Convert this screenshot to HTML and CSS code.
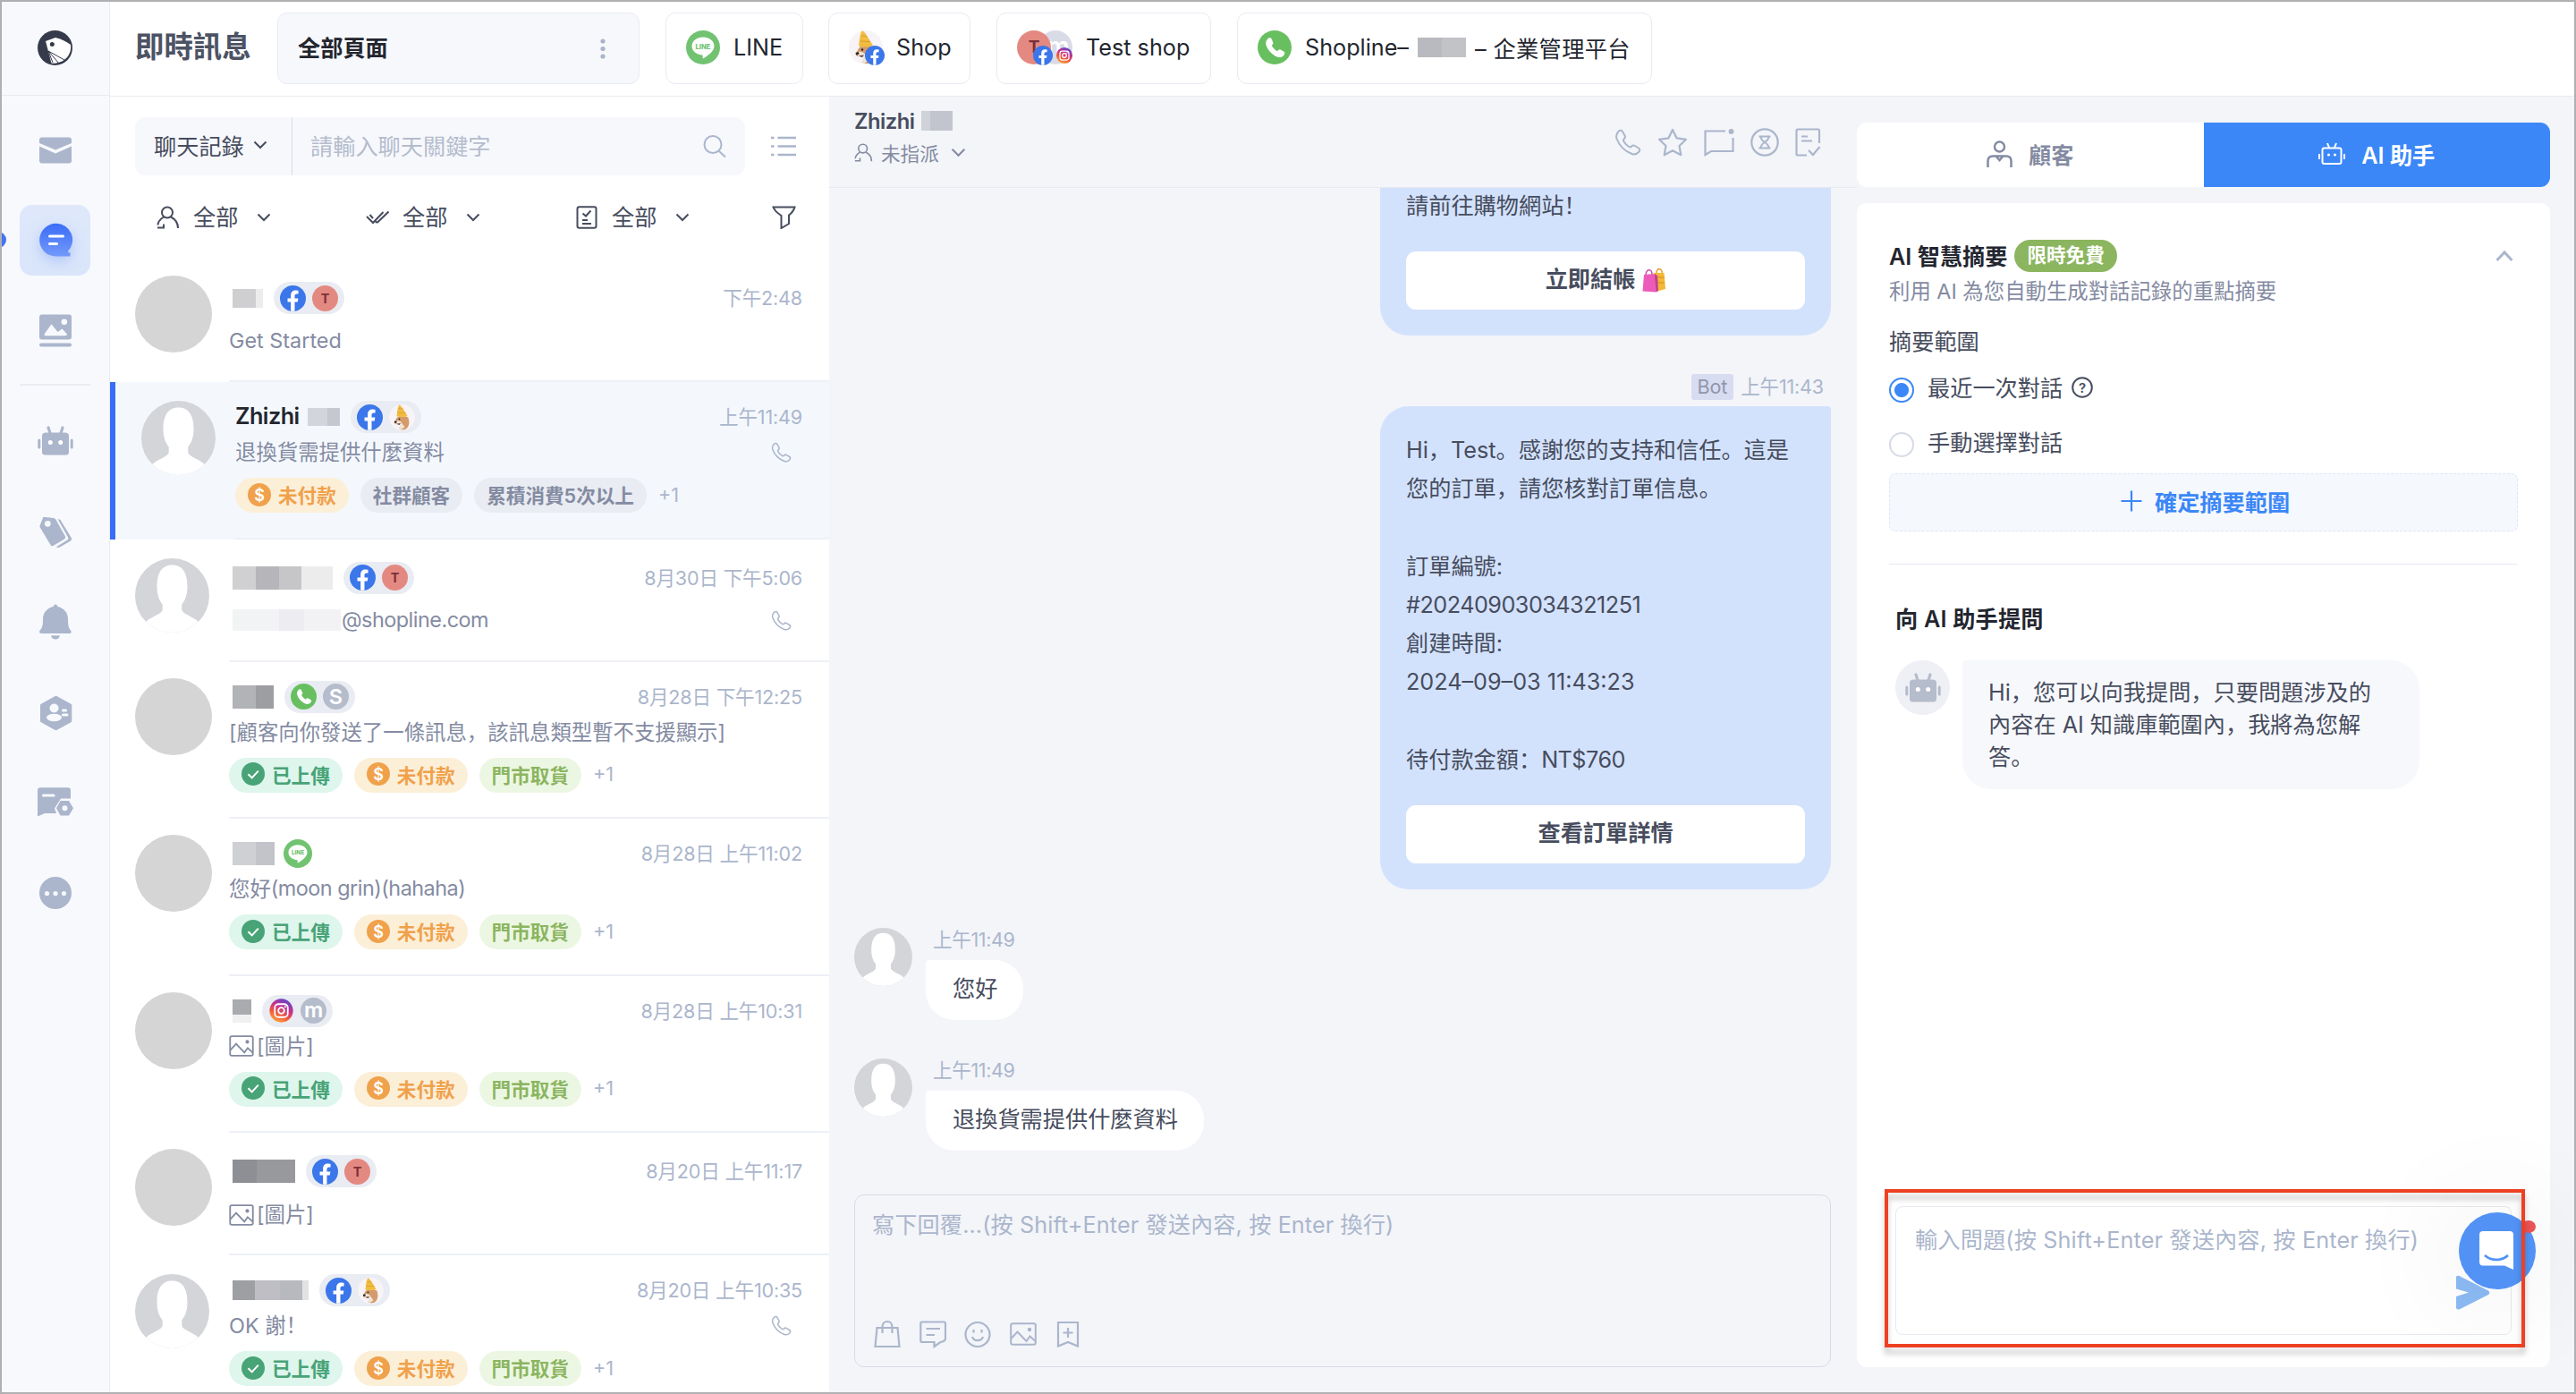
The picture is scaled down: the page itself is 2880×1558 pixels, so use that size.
FILE: index.html
```html
<!DOCTYPE html>
<html lang="zh-CN">
<head>
    <meta charset="UTF-8">
    <meta name="viewport" content="width=device-width, initial-scale=1.0">
    <title>即時訊息</title>
    <link rel="stylesheet" href="styles.css">
</head>
<body>
    <!-- Icon sprite -->
    <svg class="sprite" width="0" height="0">
        <defs>
            <linearGradient id="chat-grad" x1="0" y1="0" x2="0" y2="1"><stop offset="0" stop-color="#3a6df7"/><stop offset="1" stop-color="#7399fa"/></linearGradient>
            <linearGradient id="ig-grad" x1="0.2" y1="1" x2="0.7" y2="0"><stop offset="0" stop-color="#fbb040"/><stop offset="0.35" stop-color="#f15a3a"/><stop offset="0.65" stop-color="#c4308f"/><stop offset="1" stop-color="#5a48d0"/></linearGradient>
            <clipPath id="avatar-clip"><circle cx="50" cy="50" r="50"/></clipPath>
        </defs>
        <symbol id="i-chevron" viewBox="0 0 16 12"><path d="M1.5 2.5 L8 9 L14.5 2.5" fill="none" stroke="currentColor" stroke-width="2"/></symbol>
        <symbol id="i-phone" viewBox="0 0 30 30"><path d="M4 3.5 C5.5 1.5 8 1.3 9 3 L11.5 7.5 C12.3 9.2 12 10.3 10.8 11.2 C9.8 12 9.8 13 10.5 14.2 C12 16.8 13.8 18.5 16.3 20 C17.5 20.7 18.3 20.5 19.2 19.5 C20.2 18.3 21.5 18.2 22.8 19 L27 21.5 C28.7 22.6 28.5 24.5 27 26 C25 28.2 22.3 29 19.5 28 C11 24.8 5.5 19 2.5 11 C1.5 8 2.2 5.6 4 3.5 Z" fill="none" stroke="currentColor" stroke-width="2"/></symbol>
        <symbol id="i-person" viewBox="0 0 26 26"><circle cx="12" cy="7.5" r="6" fill="none" stroke="currentColor" stroke-width="2"/><path d="M8 12.5 C4 15 1.5 18.5 1.5 21.5 M1 24.5 L8 24.5 L8 20.5 M16 12.5 C21 15 24 19 24 25" fill="none" stroke="currentColor" stroke-width="2"/></symbol>
        <symbol id="i-image" viewBox="0 0 30 26"><rect x="1.2" y="1.2" width="27.6" height="23.6" rx="2" fill="none" stroke="currentColor" stroke-width="2"/><path d="M1.5 18 L8.5 10.5 L18.5 21 L22.5 15.5 L28.5 21" fill="none" stroke="currentColor" stroke-width="2"/><circle cx="22" cy="8" r="2.2" fill="currentColor"/></symbol>
        <symbol id="i-fb" viewBox="0 0 32 32"><circle cx="16" cy="16" r="16" fill="#3b76ea"/><path d="M13.4 31.8 V20.4 H9.4 V15.9 H13.4 V12.4 C13.4 8.4 15.7 6.2 19.3 6.2 C21 6.2 22.7 6.5 22.7 6.5 V10.4 H20.8 C18.8 10.4 18.2 11.6 18.2 12.9 V15.9 H22.5 L21.8 20.4 H18.2 V31.8 Z" fill="#fff"/></symbol>
        <symbol id="i-t" viewBox="0 0 32 32"><circle cx="16" cy="16" r="16" fill="#e48981"/><text x="16" y="22" text-anchor="middle" font-family="Inter" font-weight="700" font-size="16" fill="#7b3038">T</text></symbol>
        <symbol id="i-wa" viewBox="0 0 32 32"><circle cx="16" cy="16" r="16" fill="#68bf60"/><path d="M9.3 8.2 C10.6 6.5 12.5 6.6 13.2 8.2 L14.6 11.4 C15 12.5 14.2 13.3 13.3 14.2 C14.5 16.8 16.2 18.4 18.7 19.5 C19.7 18.3 20.5 17.6 21.6 18.2 L24.6 19.8 C26 20.8 25.7 22.3 24.6 23.5 C22.6 25.8 19.8 25.7 16.8 24.2 C12.5 21.8 9.6 18.6 8.2 14.4 C7.4 11.8 7.7 9.8 9.3 8.2 Z" fill="#fff"/></symbol>
        <symbol id="i-s" viewBox="0 0 32 32"><circle cx="16" cy="16" r="16" fill="#b5bccb"/><text x="16" y="25.5" text-anchor="middle" font-family="Inter" font-weight="600" font-size="26" fill="#fff">S</text></symbol>
        <symbol id="i-m" viewBox="0 0 32 32"><circle cx="16" cy="16" r="16" fill="#b5bccb"/><text x="16" y="24.5" text-anchor="middle" font-family="Inter" font-weight="600" font-size="26" fill="#fff">m</text></symbol>
        <symbol id="i-line" viewBox="0 0 38 38"><circle cx="19" cy="19" r="19" fill="#71c371"/><path d="M19 7.5 C26 7.5 31.5 11.9 31.5 17.5 C31.5 23.5 24 28.5 19 31.5 C18.4 31.5 18.8 29 18.5 27.5 C11.5 27 6.5 23 6.5 17.5 C6.5 11.9 12 7.5 19 7.5 Z" fill="#fff"/><text x="19" y="20.7" text-anchor="middle" font-family="Inter" font-weight="800" font-size="7.6" fill="#71c371">LINE</text></symbol>
        <symbol id="i-ig" viewBox="0 0 32 32"><circle cx="16" cy="16" r="14.5" fill="url(#ig-grad)"/><rect x="8" y="8" width="16" height="16" rx="4.5" fill="none" stroke="#fff" stroke-width="2"/><circle cx="16" cy="16" r="3.7" fill="none" stroke="#fff" stroke-width="2"/><circle cx="20.8" cy="11.3" r="1.2" fill="#fff"/></symbol>
        <symbol id="i-dog" viewBox="0 0 38 38"><circle cx="19" cy="19" r="19" fill="#f7f3f6"/><path d="M11 20 C13 17 17 16 22 17 L28 19 C30 25 30 31 26 35 C22 38 17 37.500 15 35 C17 32 18 29 16 28 L10 29 C7 28 7 25 9 24 Z" fill="#d49a6a"/><path d="M10 24 C14 23 18 25 19 28 L23 33 L17 37 L15 34 C17 31 17 29 14 28.500 L10 29 Z" fill="#f1e4d8"/><path d="M7.500 25 L11 24 L11.500 26.500 L8.500 27.500 Z" fill="#2c2524"/><path d="M10.500 28.500 L17 27.500 L15 30 Z" fill="#5a3a33"/><circle cx="15" cy="21.500" r="1.200" fill="#2c2524"/><path d="M14.500 0.500 C17 0.500 19 4 21.500 8 L27 17 C22 19 16 19 11 17.500 C12 12 12 5 14.500 0.500 Z" fill="#f2bc41"/><path d="M14 6 L20 6.500 M12.500 12 L24 12.500" stroke="#d99c2b" stroke-width="1"/></symbol>
        <symbol id="i-user" viewBox="0 0 100 100"><g clip-path="url(#avatar-clip)"><rect width="100" height="100" fill="#d3d5d9"/><path d="M50 9 C63 9 70.500 18 70.500 38 C70.500 50 67 57 63 62 V70 C66 77 82 79 88 89 V104 H12 V89 C18 79 34 77 37 70 V62 C33 57 29.500 50 29.500 38 C29.500 18 37 9 50 9 Z" fill="#fff"/></g></symbol>
        <symbol id="i-check" viewBox="0 0 26 26"><circle cx="13" cy="13" r="13" fill="#48a377"/><path d="M7.500 13.200 L11.700 17.400 L18.800 9.600" fill="none" stroke="#fff" stroke-width="2"/></symbol>
        <symbol id="i-dollar" viewBox="0 0 26 26"><circle cx="13" cy="13" r="13" fill="#f0a14b"/><text x="13" y="19.500" text-anchor="middle" font-family="Inter" font-weight="600" font-size="18" fill="#fff">$</text></symbol>
        <symbol id="i-robot" viewBox="0 0 40 40"><path d="M9.500 10.500 H30.500 Q35 10.500 35 14 V32 Q35 35.500 31.500 35.500 H8.500 Q5 35.500 5 32 V14 Q5 10.500 9.500 10.500 Z" fill="currentColor"/><path d="M12 5 L14 11 M28 5 L26 11" stroke="currentColor" stroke-width="3.200" stroke-linecap="round"/><path d="M1.800 19 V27 M38.200 19 V27" stroke="currentColor" stroke-width="3" stroke-linecap="round"/><circle cx="14.300" cy="21.500" r="2.500" fill="#fff"/><circle cx="25.700" cy="21.500" r="2.500" fill="#fff"/></symbol>
    </svg>

    <div class="app">
        <nav class="sidebar">
            <div class="logo">
                <svg width="39" height="39" viewBox="0 0 39 39"><circle cx="19.500" cy="19.500" r="19.500" fill="#363b4b"/><path d="M9 12 L20 8 C27 9.500 33 13 37 16 C38.500 27 30 37.500 15.500 36.800 Z" fill="#fff"/><circle cx="16.300" cy="15.500" r="2.500" fill="#363b4b"/><path d="M12 23 L17 36 M12 23 L24 37 M12 23 L30 33" stroke="#363b4b" stroke-width="1"/></svg>
            </div>
            <div class="nav-item"><svg width="40" height="40" viewBox="0 0 40 40"><path d="M5 5.500 H35 Q38 5.500 38 8.500 V12 L20 19.500 L2 12 V8.500 Q2 5.500 5 5.500 Z M2 15.500 L20 23.500 L38 15.500 V31.500 Q38 34.500 35 34.500 H5 Q2 34.500 2 31.500 Z" fill="currentColor"/></svg></div>
            <div class="nav-item active"><svg width="40" height="40" viewBox="0 0 40 40"><path d="M20.500 0.800 A18.300 18.300 0 0 1 33.800 32 Q34.500 33.500 36.500 33.500 V37.500 H20.500 A18.300 18.300 0 0 1 20.500 0.800 Z" fill="url(#chat-grad)"/><path d="M13.500 15 H28.500 M13.500 23.500 H21.500" stroke="#fff" stroke-width="3" stroke-linecap="round"/></svg></div>
            <div class="nav-item"><svg width="40" height="40" viewBox="0 0 40 40"><rect x="2" y="1.500" width="36" height="28" rx="3" fill="currentColor"/><circle cx="29.800" cy="9.800" r="3.300" fill="#f7f9fd"/><path d="M7.500 23.500 L15.500 12.300 L22.500 21 L27.500 17.500 L33 23.500 Q33 25.300 31 25.300 H9 Q7 25.300 7.500 23.500 Z" fill="#f7f9fd"/><rect x="2" y="33.500" width="36" height="4" rx="2" fill="currentColor"/></svg></div>
            <div class="nav-line"></div>
            <div class="nav-item"><svg width="40" height="40"><use href="#i-robot"/></svg></div>
            <div class="nav-item"><svg width="40" height="40" viewBox="0 0 40 40"><path d="M6.500 3.800 L18 5 L20 6 L31 25.500 Q31.800 27 30 28.500 L17.500 36 Q15.500 37 14.500 35 L2.500 15 V13.500 Z" fill="currentColor"/><circle cx="11.300" cy="11.300" r="3.400" fill="#f7f9fd"/><path d="M22.500 6 L25.500 7 L38 27.500 Q38.500 29 37 30.500 L24 38 L20.500 37.500 L34 29 Q35 28 34 26.500 Z" fill="currentColor"/></svg></div>
            <div class="nav-item"><svg width="40" height="40" viewBox="0 0 40 40"><path d="M20 0.500 Q22 0.500 22.500 3 C30 4.500 34 10.500 34 17 C34 23 34.500 27 37 29.500 Q39 33 35.500 33 H4.500 Q1 33 2.500 29.500 C5.500 27 6 23 6 17 C6 10.500 10 4.500 17.500 3 Q18 0.500 20 0.500 Z M15 35.300 H25 Q24 39.500 20 39.500 Q16 39.500 15 35.300 Z" fill="currentColor"/></svg></div>
            <div class="nav-item"><svg width="40" height="40" viewBox="0 0 40 40"><path d="M20.500 2 L37.800 11.500 V30.500 L20.500 40 L3.500 30.500 V11.500 Z" fill="currentColor" stroke="currentColor" stroke-linejoin="round"/><circle cx="18.500" cy="15.500" r="5" fill="#f7f9fd"/><ellipse cx="18.500" cy="26" rx="8.500" ry="4.200" fill="#f7f9fd"/><path d="M28.500 18 H31.500 M28.500 23 H33" stroke="#f7f9fd" stroke-width="3.200" stroke-linecap="round"/></svg></div>
            <div class="nav-item"><svg width="40" height="40" viewBox="0 0 40 40"><path d="M3 3.300 H34 Q37 3.300 37 6.300 V15.500 H26 L19 26.500 L21 32 H8 L0 35.500 V6.300 Q0 3.300 3 3.300 Z M25.500 18 H35 L40 26.300 L35 34.500 H25.500 L21 26.300 Z" fill="currentColor"/><path d="M6.500 12 H18" stroke="#f7f9fd" stroke-width="3.200" stroke-linecap="round"/><circle cx="30.500" cy="26.300" r="3" fill="#f7f9fd"/></svg></div>
            <div class="nav-item"><svg width="40" height="40" viewBox="0 0 40 40"><circle cx="20" cy="20" r="18" fill="currentColor"/><circle cx="10.500" cy="20.500" r="2.600" fill="#f7f9fd"/><circle cx="20" cy="20.500" r="2.600" fill="#f7f9fd"/><circle cx="29.500" cy="20.500" r="2.600" fill="#f7f9fd"/></svg></div>
            <div class="edge-dot"></div>
        </nav>

        <div class="main">
            <header class="topbar">
                <h1>即時訊息</h1>
                <div class="page-select"><span>全部頁面</span><svg width="6" height="24" viewBox="0 0 6 24"><circle cx="3" cy="3" r="2.600" fill="#aab5cc"/><circle cx="3" cy="11.500" r="2.600" fill="#aab5cc"/><circle cx="3" cy="20" r="2.600" fill="#aab5cc"/></svg></div>
                <div class="channel ch-line"><svg width="38" height="38"><use href="#i-line"/></svg><span>LINE</span></div>
                <div class="channel ch-shop">
                    <div class="ch-icon"><svg width="38" height="38"><use href="#i-dog"/></svg><svg class="sub" width="22" height="22"><use href="#i-fb"/></svg></div>
                    <span>Shop</span>
                </div>
                <div class="channel ch-test">
                    <div class="ch-icon"><svg width="62" height="38" viewBox="0 0 62 38"><circle cx="43" cy="19" r="19" fill="#d9dbe7"/><text x="46" y="28" text-anchor="middle" font-family="Inter" font-weight="600" font-size="28" fill="#fff">m</text><circle cx="19" cy="19" r="19" fill="#e48981"/><text x="19" y="25" text-anchor="middle" font-family="Inter" font-weight="700" font-size="19" fill="#7b3038">T</text></svg><svg class="sub" width="22" height="22"><use href="#i-fb"/></svg><svg class="sub ig" width="20" height="20"><use href="#i-ig"/></svg></div>
                    <span>Test shop</span>
                </div>
                <div class="channel ch-wa"><svg width="38" height="38"><use href="#i-wa"/></svg><span>Shopline–</span><i class="mask mask-top"></i><span class="wide">– 企業管理平台</span></div>
            </header>

            <div class="columns">
                <section class="list">
                    <div class="search-row">
                        <div class="search">
                            <div class="search-type">聊天記錄<svg width="16" height="12"><use href="#i-chevron"/></svg></div>
                            <div class="search-input">請輸入聊天關鍵字</div>
                            <svg class="muted" width="28" height="28" viewBox="0 0 28 28"><circle cx="12" cy="11.500" r="9.500" fill="none" stroke="currentColor" stroke-width="2"/><path d="M18.500 18.500 L26 25.500" stroke="currentColor" stroke-width="2"/></svg>
                        </div>
                        <svg class="muted" width="28" height="26" viewBox="0 0 28 26"><path d="M0 3 H3.500 M0 12.500 H3.500 M0 22 H3.500 M7.500 3 H28 M7.500 12.500 H28 M7.500 22 H28" stroke="currentColor" stroke-width="2.600"/></svg>
                    </div>
                    <div class="filters">
                        <div class="filter"><svg width="26" height="26"><use href="#i-person"/></svg>全部<svg class="chev" width="16" height="12"><use href="#i-chevron"/></svg></div>
                        <div class="filter"><svg width="26" height="26" viewBox="0 0 26 26"><path d="M1 12 L8 19 L19.500 7 M4.500 10 L8 14 M12.500 19 L25.500 6.500 M10.500 17 L12.500 19" fill="none" stroke="currentColor" stroke-width="2"/></svg>全部<svg class="chev" width="16" height="12"><use href="#i-chevron"/></svg></div>
                        <div class="filter"><svg width="26" height="26" viewBox="0 0 26 26"><rect x="2.500" y="1.200" width="21" height="23.600" rx="2" fill="none" stroke="currentColor" stroke-width="2"/><path d="M8.500 8.500 L12 11.500 L17.500 5.500 M8 16 H14 M8 20 H18" fill="none" stroke="currentColor" stroke-width="2"/></svg>全部<svg class="chev" width="16" height="12"><use href="#i-chevron"/></svg></div>
                        <svg class="funnel" width="27" height="26" viewBox="0 0 27 26"><path d="M1.500 1.500 H25.500 Q24.500 6 19 10.500 V20 L10.500 25 V11 Q3 6 1.500 1.500 Z" fill="none" stroke="currentColor" stroke-width="2"/></svg>
                    </div>

                    <div class="conv short">
                        <div class="photo"></div>
                        <div class="conv-body">
                            <div class="conv-head"><i class="mask mask-a"></i><span class="pill"><svg><use href="#i-fb"/></svg><svg><use href="#i-t"/></svg></span><time>下午2:48</time></div>
                            <div class="preview">Get Started</div>
                        </div>
                    </div>
                    <div class="conv selected">
                        <svg class="person"><use href="#i-user"/></svg>
                        <div class="conv-body">
                            <div class="conv-head"><b>Zhizhi</b><i class="mask mask-b"></i><span class="pill"><svg><use href="#i-fb"/></svg><svg><use href="#i-dog"/></svg></span><time>上午11:49</time></div>
                            <div class="preview">退換貨需提供什麼資料<svg class="call" width="23" height="23"><use href="#i-phone"/></svg></div>
                            <div class="tags"><span class="tag orange"><svg><use href="#i-dollar"/></svg>未付款</span><span class="tag gray">社群顧客</span><span class="tag gray">累積消費5次以上</span><span class="more">+1</span></div>
                        </div>
                    </div>
                    <div class="conv short">
                        <svg class="person"><use href="#i-user"/></svg>
                        <div class="conv-body">
                            <div class="conv-head"><i class="mask mask-c"></i><span class="pill"><svg><use href="#i-fb"/></svg><svg><use href="#i-t"/></svg></span><time>8月30日 下午5:06</time></div>
                            <div class="preview"><i class="mask mask-mail"></i><span class="tight">@shopline.com</span><svg class="call" width="23" height="23"><use href="#i-phone"/></svg></div>
                        </div>
                    </div>
                    <div class="conv">
                        <div class="photo"></div>
                        <div class="conv-body">
                            <div class="conv-head"><i class="mask mask-d"></i><span class="pill"><svg><use href="#i-wa"/></svg><svg><use href="#i-s"/></svg></span><time>8月28日 下午12:25</time></div>
                            <div class="preview">[顧客向你發送了一條訊息，該訊息類型暫不支援顯示]</div>
                            <div class="tags"><span class="tag teal"><svg><use href="#i-check"/></svg>已上傳</span><span class="tag orange"><svg><use href="#i-dollar"/></svg>未付款</span><span class="tag green">門市取貨</span><span class="more">+1</span></div>
                        </div>
                    </div>
                    <div class="conv">
                        <div class="photo"></div>
                        <div class="conv-body">
                            <div class="conv-head"><i class="mask mask-e"></i><svg class="single" width="32" height="32"><use href="#i-line"/></svg><time>8月28日 上午11:02</time></div>
                            <div class="preview">您好<span class="tight">(moon grin)(hahaha)</span></div>
                            <div class="tags"><span class="tag teal"><svg><use href="#i-check"/></svg>已上傳</span><span class="tag orange"><svg><use href="#i-dollar"/></svg>未付款</span><span class="tag green">門市取貨</span><span class="more">+1</span></div>
                        </div>
                    </div>
                    <div class="conv">
                        <div class="photo"></div>
                        <div class="conv-body">
                            <div class="conv-head"><i class="mask mask-f"></i><span class="pill"><svg><use href="#i-ig"/></svg><svg><use href="#i-m"/></svg></span><time>8月28日 上午10:31</time></div>
                            <div class="preview"><svg class="pic" width="28" height="24"><use href="#i-image"/></svg>[圖片]</div>
                            <div class="tags"><span class="tag teal"><svg><use href="#i-check"/></svg>已上傳</span><span class="tag orange"><svg><use href="#i-dollar"/></svg>未付款</span><span class="tag green">門市取貨</span><span class="more">+1</span></div>
                        </div>
                    </div>
                    <div class="conv short">
                        <div class="photo"></div>
                        <div class="conv-body">
                            <div class="conv-head"><i class="mask mask-g"></i><span class="pill"><svg><use href="#i-fb"/></svg><svg><use href="#i-t"/></svg></span><time>8月20日 上午11:17</time></div>
                            <div class="preview"><svg class="pic" width="28" height="24"><use href="#i-image"/></svg>[圖片]</div>
                        </div>
                    </div>
                    <div class="conv">
                        <svg class="person"><use href="#i-user"/></svg>
                        <div class="conv-body">
                            <div class="conv-head"><i class="mask mask-h"></i><span class="pill"><svg><use href="#i-fb"/></svg><svg><use href="#i-dog"/></svg></span><time>8月20日 上午10:35</time></div>
                            <div class="preview">OK 謝！<svg class="call" width="23" height="23"><use href="#i-phone"/></svg></div>
                            <div class="tags"><span class="tag teal"><svg><use href="#i-check"/></svg>已上傳</span><span class="tag orange"><svg><use href="#i-dollar"/></svg>未付款</span><span class="tag green">門市取貨</span><span class="more">+1</span></div>
                        </div>
                    </div>
                </section>

                <section class="chat">
                    <div class="chat-head">
                        <div>
                            <div class="chat-name">Zhizhi<i class="mask mask-chat"></i></div>
                            <div class="assignee"><svg width="21" height="21"><use href="#i-person"/></svg>未指派<svg width="17" height="13"><use href="#i-chevron"/></svg></div>
                        </div>
                        <div class="chat-tools">
                            <svg width="30" height="30"><use href="#i-phone"/></svg>
                            <svg width="34" height="32" viewBox="0 0 34 32"><path d="M17 2 L21.500 11.300 L32 12.800 L24.500 20 L26.300 30.200 L17 25.300 L7.700 30.200 L9.500 20 L2 12.800 L12.500 11.300 Z" fill="none" stroke="currentColor" stroke-width="2.200" stroke-linejoin="round"/></svg>
                            <svg width="34" height="32" viewBox="0 0 34 32"><path d="M24 3.500 H1.500 V30 L8 26 H32.500 V11" fill="none" stroke="currentColor" stroke-width="2.200"/><circle cx="30.500" cy="4" r="2.900" fill="currentColor"/></svg>
                            <svg width="32" height="32" viewBox="0 0 32 32"><circle cx="16" cy="16" r="14.700" fill="none" stroke="currentColor" stroke-width="2.200"/><path d="M9.500 9.500 H22.500 M9.500 22.500 H22.500 M11.500 9.500 Q11.500 13 16 16 Q20.500 13 20.500 9.500 M11.500 22.500 Q11.500 19 16 16 Q20.500 19 20.500 22.500" fill="none" stroke="currentColor" stroke-width="2"/></svg>
                            <svg width="29" height="32" viewBox="0 0 29 32"><path d="M13 30.500 H3 Q1.500 30.500 1.500 29 V3 Q1.500 1.500 3 1.500 H25.500 Q27 1.500 27 3 V17 M7 9.500 H14 M7 14.500 H19 M15 25 L20 30 L27.500 21" fill="none" stroke="currentColor" stroke-width="2.200"/></svg>
                        </div>
                    </div>

                    <div class="thread">
                        <div class="bubble out first">
                            <p>請前往購物網站！</p>
                            <div class="bubble-btn">立即結帳
                                <svg width="26" height="28" viewBox="0 0 26 28"><path d="M16 6 C16 0 22 0 22.500 7" fill="none" stroke="#e8a33c" stroke-width="1.600"/><path d="M13 6 H24.500 L26 24 L15 27 Z" fill="#f2b836"/><path d="M14 11 H25 M14 17 H25" stroke="#e09b2c" stroke-width="1.500"/><path d="M4 8 C5 1 11 1 11 8" fill="none" stroke="#d054a8" stroke-width="1.600"/><path d="M2 8 L13.500 7 L15.500 27.500 L0.500 26.500 Z" fill="#ec5bbb"/><path d="M13.500 7 L17 9 L18 26 L15.500 27.500 Z" fill="#c23f93"/></svg>
                            </div>
                        </div>
                        <div class="meta"><span class="bot">Bot</span>上午11:43</div>
                        <div class="bubble out">
                            <p>Hi，Test。感謝您的支持和信任。這是<br>您的訂單，請您核對訂單信息。<br><br>訂單編號:<br><span class="tight">#20240903034321251</span><br>創建時間:<br>2024–09–03 11:43:23<br><br>待付款金額：<span class="tight">NT$760</span></p>
                            <div class="bubble-btn">查看訂單詳情</div>
                        </div>
                        <div class="incoming">
                            <svg width="65" height="65"><use href="#i-user"/></svg>
                            <div><time>上午11:49</time><div class="bubble in">您好</div></div>
                        </div>
                        <div class="incoming">
                            <svg width="65" height="65"><use href="#i-user"/></svg>
                            <div><time>上午11:49</time><div class="bubble in">退換貨需提供什麼資料</div></div>
                        </div>
                    </div>

                    <div class="composer">
                        <div class="placeholder">寫下回覆...(按 Shift+Enter 發送內容, 按 Enter 換行)</div>
                        <div class="composer-tools">
                            <svg width="30" height="32" viewBox="0 0 30 32"><path d="M3.500 9 H26.500 L28.500 30 H1.500 Z M9.500 15 V8 C9.500 0 20.500 0 20.500 8 V15" fill="none" stroke="currentColor" stroke-width="2.200"/></svg>
                            <svg width="30" height="32" viewBox="0 0 30 32"><path d="M2.500 2.500 H27.500 Q29 2.500 29 4 V21 Q29 24 23.500 25 L16.500 30 V25 H3 Q1.300 25 1.300 23.500 V4 Q1.300 2.500 2.500 2.500 Z M7.500 10 H23 M7.500 17 H17" fill="none" stroke="currentColor" stroke-width="2.200"/></svg>
                            <svg width="30" height="32" viewBox="0 0 30 32"><circle cx="15" cy="16.500" r="13.500" fill="none" stroke="currentColor" stroke-width="2.200"/><path d="M10.500 11 V14.500 M19.500 11 V14.500 M9 19 C10.500 24.500 19.500 24.500 21 19" fill="none" stroke="currentColor" stroke-width="2.200"/></svg>
                            <svg width="30" height="32" viewBox="0 -3 30 32"><use href="#i-image" width="30" height="26"/></svg>
                            <svg width="30" height="32" viewBox="0 0 30 32"><path d="M4 3 H26 V29.500 L15 25 L4 29.500 Z M15 9 V20 M9.500 14.500 H20.500" fill="none" stroke="currentColor" stroke-width="2.200"/></svg>
                        </div>
                    </div>
                </section>

                <aside class="assistant">
                    <div class="tabs">
                        <div class="tab"><svg width="29" height="30" viewBox="0 0 29 30"><circle cx="14.500" cy="7" r="5.500" fill="none" stroke="currentColor" stroke-width="2.500"/><path d="M1.500 30 V23 Q1.500 17.500 7 17.500 H22 Q27.500 17.500 27.500 23 V30 M10.500 17.500 L14.500 22 L18.500 17.500" fill="none" stroke="currentColor" stroke-width="2.500"/></svg>顧客</div>
                        <div class="tab on"><svg width="30" height="26" viewBox="0 0 30 26"><rect x="4.500" y="6.500" width="21" height="17.500" rx="2" fill="none" stroke="#fff" stroke-width="2"/><path d="M10 1 L12 6 M20 1 L18 6 M1 13 V19 M29 13 V19" stroke="#fff" stroke-width="2"/><circle cx="11.500" cy="14" r="1.600" fill="#fff"/><circle cx="18.500" cy="14" r="1.600" fill="#fff"/></svg>AI 助手</div>
                    </div>
                    <div class="card">
                        <div class="card-title"><b>AI 智慧摘要</b><span class="badge">限時免費</span><svg class="fold" width="20" height="14" viewBox="0 0 20 14"><path d="M1.500 12 L10 3 L18.500 12" fill="none" stroke="currentColor" stroke-width="3"/></svg></div>
                        <div class="card-desc">利用 AI 為您自動生成對話記錄的重點摘要</div>
                        <div class="field-label">摘要範圍</div>
                        <div class="radio-row"><span class="radio checked"></span><span>最近一次對話</span><svg width="24" height="24" viewBox="0 0 24 24"><circle cx="12" cy="12" r="10.800" fill="none" stroke="currentColor" stroke-width="2"/><text x="12" y="17.500" text-anchor="middle" font-family="Inter" font-weight="600" font-size="15" fill="currentColor">?</text></svg></div>
                        <div class="radio-row second"><span class="radio"></span><span>手動選擇對話</span></div>
                        <div class="confirm"><svg width="24" height="24" viewBox="0 0 24 24"><path d="M12 0.500 V23.500 M0.500 12 H23.500" stroke="currentColor" stroke-width="2.200"/></svg>確定摘要範圍</div>
                        <div class="card-line"></div>
                        <div class="ask-title">向 AI 助手提問</div>
                        <div class="ask-row">
                            <div class="robot-avatar"><svg width="40" height="40"><use href="#i-robot"/></svg></div>
                            <div class="ask-bubble">Hi，您可以向我提問，只要問題涉及的<br>內容在 AI 知識庫範圍內，我將為您解<br>答。</div>
                        </div>
                        <div class="ask-input">
                            <span>輸入問題(按 Shift+Enter 發送內容, 按 Enter 換行)</span>
                            <svg class="send" width="38" height="40" viewBox="0 0 38 40"><path d="M0 2 Q1 0 3.500 1 L36 17.500 Q38.500 20 36 22 L3.500 38.500 Q1 39 0 37 V24 L14 19.500 L0 15.500 Z" fill="#8cbaf4"/></svg>
                        </div>
                    </div>
                </aside>
            </div>
        </div>

        <div class="launcher"><svg width="40" height="46" viewBox="0 0 40 46"><path d="M4 1 H34 Q38 1 38 5 V44 L28 39.500 H4 Q0 39.500 0 35.500 V5 Q0 1 4 1 Z" fill="#fff"/><path d="M6 28 C13 34.500 25 34.500 32 28" fill="none" stroke="#5292f5" stroke-width="2.600"/></svg></div>
        <div class="unread"></div>
        <div class="highlight"></div>
    </div>
</body>
</html>
```
FILE: styles.css
```css
* {
    box-sizing: border-box;
}
body {
    margin: 0;
    font-family: Inter, "Noto Sans CJK SC", sans-serif;
    font-size: 25.2px;
    color: #474d5e;
    background: #f3f5f9;
}
.sprite {
    position: absolute;
}
svg {
    display: block;
    flex: none;
}
h1, p {
    margin: 0;
}
.app {
    position: relative;
    display: flex;
    width: 2880px;
    height: 1558px;
    border: 2px solid #b0b0b3;
    overflow: hidden;
}
.tight {
    letter-spacing: -0.5px;
}
.wide {
    letter-spacing: 0.4px;
}

/* Sidebar */
.sidebar {
    position: relative;
    width: 121px;
    flex: none;
    background: #f7f9fd;
    border-right: 1px solid #e9ebf1;
    color: #abb6cc;
}
.logo {
    height: 105px;
    padding: 32px 0 0 40px;
    border-bottom: 1px solid #e9ebf1;
    margin-bottom: 21px;
}
.nav-item {
    width: 79px;
    height: 79px;
    margin: 0 0 22px 20px;
    border-radius: 14px;
    display: flex;
    align-items: center;
    justify-content: center;
}
.nav-item.active {
    background: linear-gradient(#dfe8fb, #d9e5fa);
}
.nav-item.active svg {
    filter: drop-shadow(0 5px 7px rgba(58, 109, 247, 0.25));
}
.nav-line {
    width: 79px;
    height: 2px;
    margin: -2px 0 22px 20px;
    background: #eaecf1;
}
.edge-dot {
    position: absolute;
    left: -13px;
    top: 257px;
    width: 18px;
    height: 18px;
    border-radius: 50%;
    background: #4474f2;
}

/* Top bar */
.main {
    flex: 1;
    min-width: 0;
    display: flex;
    flex-direction: column;
}
.topbar {
    height: 106px;
    flex: none;
    background: #fff;
    border-bottom: 1px solid #e9ebf1;
    display: flex;
    align-items: flex-start;
    gap: 29px;
    padding: 12px 0 0 28px;
}
h1 {
    width: 130px;
    font-size: 32.4px;
    font-weight: 600;
    line-height: 80px;
    white-space: nowrap;
    margin-top: -1px;
    color: #4d5364;
}
.page-select {
    width: 405px;
    height: 80px;
    border: 1px solid #e9ecf4;
    border-radius: 11px;
    background: #f7f8fc;
    display: flex;
    align-items: center;
    justify-content: space-between;
    padding: 0 37px 4px 22px;
    color: #23262f;
    font-weight: 600;
}
.page-select svg {
    margin-top: 5px;
}
.channel {
    height: 80px;
    border: 1px solid #e9ebf2;
    border-radius: 11px;
    display: flex;
    align-items: center;
    gap: 15px;
    padding: 0 0 2px 22px;
    color: #23262f;
    white-space: nowrap;
}
.ch-line {
    width: 154px;
}
.ch-shop {
    width: 159px;
    margin-left: -1px;
}
.ch-test {
    width: 240px;
}
.ch-wa {
    width: 464px;
}
.ch-icon {
    position: relative;
}
.ch-icon .sub {
    position: absolute;
    left: 18px;
    top: 17px;
}
.ch-icon .sub.ig {
    left: 43px;
    top: 18px;
}

/* Blurred-out names */
.mask {
    flex: none;
    display: inline-block;
    height: 26px;
    margin-left: 4px;
}
.mask-top {
    width: 54px;
    height: 22px;
    margin: 0 -5px;
    background: linear-gradient(90deg, #b9babf 50%, #c2c3c7 50%);
}
.mask-a {
    width: 34px;
    height: 21px;
    background: linear-gradient(90deg, #cfcfd1 76%, #ececed 76%);
}
.conv .mask-b {
    width: 36px;
    height: 20px;
    margin-left: 9px;
    background: linear-gradient(90deg, #d3d5dc 60%, #c5c8d0 60%);
}
.mask-c {
    width: 112px;
    background: linear-gradient(90deg, #d0d0d2 23%, #b6b6ba 23% 46%, #c6c6c8 46% 69%, #ececed 69%);
}
.mask-mail {
    width: 121px;
    height: 24px;
    margin-right: 1px;
    background: linear-gradient(90deg, #f2f3f4 43%, #ededf1 43% 66%, #f2f2f5 66%);
}
.mask-d {
    width: 46px;
    background: linear-gradient(90deg, #b2b3b7 56%, #9d9ea2 56%);
}
.mask-e {
    width: 47px;
    background: linear-gradient(90deg, #cfd0d3 56%, #c3c4c9 56%);
}
.mask-f {
    width: 21px;
    background: linear-gradient(#aaabae 65%, #f0f0f1 65%);
}
.mask-g {
    width: 70px;
    background: linear-gradient(90deg, #8e8f94 38%, #98999d 38%);
}
.mask-h {
    width: 85px;
    height: 22px;
    background: linear-gradient(90deg, #9e9fa3 30%, #bebec4 30% 62%, #b8b9be 62% 92%, #e2e2e5 92%);
}
.mask-chat {
    width: 35px;
    height: 22px;
    margin-left: 7px;
    background: linear-gradient(90deg, #cfd2d9 30%, #c2c5cd 30%);
}

/* Conversation list */
.columns {
    flex: 1;
    display: flex;
    min-height: 0;
}
.list {
    width: 804px;
    flex: none;
    background: #fff;
    overflow: hidden;
}
.search-row {
    display: flex;
    align-items: center;
    gap: 29px;
    padding: 23px 0 0 28px;
}
.muted {
    color: #abb6cc;
}
.search {
    width: 682px;
    height: 65px;
    border-radius: 11px;
    background: #f7f8fc;
    display: flex;
    align-items: center;
    padding-right: 20px;
}
.search-type {
    width: 176px;
    height: 65px;
    padding: 0 0 3px 21px;
    border-right: 1px solid #d9dce6;
    display: flex;
    align-items: center;
    gap: 10px;
}
.search-input {
    flex: 1;
    padding: 0 0 3px 20px;
    color: #b4bccd;
}
.filters {
    display: flex;
    align-items: center;
    height: 94px;
    padding: 0 0 4px 52px;
}
.filter {
    width: 234px;
    display: flex;
    align-items: center;
    gap: 15px;
}
.filter .chev {
    margin-left: 6px;
}
.filters .funnel {
    margin: 4px 0 0 -14px;
}
.filter svg {
    margin-top: 3px;
}
.conv {
    height: 175.5px;
    display: flex;
    padding-left: 28px;
}
.conv.short {
    height: 137px;
}
.conv.selected {
    border-left: 6px solid #3b6cf6;
    padding-left: 29px;
    background: #f4f8fd;
}
.photo {
    width: 86px;
    height: 86px;
    margin: 18px 19px 0 0;
    border-radius: 50%;
    background: #d5d5d5;
    flex: none;
}
.person {
    width: 83px;
    height: 83px;
    margin: 21px 22px 0 0;
}
.conv-body {
    flex: 1;
    padding: 21px 30px 0 0;
    border-bottom: 2px solid #edf0f6;
}
.short .conv-body {
    padding-top: 25px;
}
.conv-head {
    height: 36px;
    display: flex;
    align-items: center;
}
.conv-head b {
    padding-bottom: 2px;
    font-weight: 600;
    letter-spacing: -0.5px;
    color: #23262f;
}
.conv-head time {
    margin-left: auto;
    padding-bottom: 3px;
    font-size: 21.6px;
    letter-spacing: -0.2px;
    color: #abb6cc;
}
.pill {
    width: 79px;
    height: 36px;
    margin-left: 12px;
    border-radius: 18px;
    background: #e9ecf2;
    display: flex;
    align-items: center;
    justify-content: center;
    gap: 7px;
}
.pill svg {
    width: 29px;
    height: 29px;
}
.single {
    margin-left: 10px;
}
.preview {
    height: 42px;
    display: flex;
    align-items: center;
    padding-bottom: 2px;
    font-size: 23.4px;
    white-space: nowrap;
    color: #848ba2;
}
.short .preview {
    margin-top: 9px;
}
.preview .call {
    margin: 2px 12px 0 auto;
    color: #abb6cc;
}
.preview .pic {
    margin: 3px 3px 0 0;
}
.tags {
    display: flex;
    align-items: center;
    gap: 13px;
    margin-top: 8px;
    white-space: nowrap;
}
.tag {
    height: 39px;
    border-radius: 20px;
    padding: 0 14px 2px;
    display: flex;
    align-items: center;
    gap: 8px;
    font-size: 21.6px;
    font-weight: 600;
}
.tag svg {
    width: 26px;
    height: 26px;
}
.tag.orange {
    background: #fcefd8;
    color: #f0a14b;
}
.tag.gray {
    background: #e9ecf2;
    color: #848ba2;
}
.tag.teal {
    background: #def6ec;
    color: #48a377;
}
.tag.green {
    background: #ecf7e3;
    color: #8bb55f;
}
.more {
    padding-bottom: 2px;
    font-size: 21.6px;
    color: #abb6cc;
}

/* Chat */
.chat {
    width: 1149px;
    flex: none;
    display: flex;
    flex-direction: column;
}
.chat-head {
    height: 102px;
    flex: none;
    display: flex;
    justify-content: space-between;
    border-bottom: 1px solid #e7eaf1;
    padding: 9px 40px 0 28px;
}
.chat-name {
    display: flex;
    align-items: center;
    height: 36px;
    font-weight: 600;
    font-size: 23.8px;
    letter-spacing: -0.5px;
}
.assignee {
    display: flex;
    align-items: center;
    gap: 9px;
    height: 34px;
    font-size: 21.6px;
    color: #848ba2;
}
.assignee svg:last-child {
    margin-left: 4px;
}
.chat-tools {
    display: flex;
    align-items: center;
    gap: 18px;
    height: 83px;
    color: #abb6cc;
}
.thread {
    flex: 1;
    min-height: 0;
    overflow: hidden;
    display: flex;
    flex-direction: column;
    justify-content: flex-end;
    padding: 0 29px 49px 28px;
}
.bubble {
    flex: none;
    line-height: 43.2px;
    white-space: nowrap;
    border-radius: 32px;
}
.bubble.out {
    width: 504px;
    align-self: flex-end;
    padding: 28px 29px 29px;
    background: #d3e2fc;
    border-top-right-radius: 4px;
}
.bubble-btn {
    height: 65px;
    margin-top: 29px;
    padding-bottom: 2px;
    border-radius: 11px;
    background: #fff;
    display: flex;
    align-items: center;
    justify-content: center;
    gap: 8px;
    font-weight: 600;
}
.meta {
    flex: none;
    height: 79px;
    padding-top: 43px;
    display: flex;
    align-items: flex-start;
    justify-content: flex-end;
    gap: 8px;
    padding-right: 8px;
    line-height: 29px;
    font-size: 21.6px;
    letter-spacing: -0.2px;
    color: #abb6cc;
}
.bot {
    padding: 0 7px;
    background: #d8dcf1;
    border-radius: 3px;
    color: #9096ab;
}
.incoming {
    flex: none;
    display: flex;
    gap: 15px;
    margin-top: 43px;
}
.incoming time {
    display: block;
    height: 36px;
    padding-left: 8px;
    line-height: 27px;
    font-size: 21.6px;
    letter-spacing: -0.4px;
    color: #abb6cc;
}
.bubble.in {
    width: fit-content;
    height: 67px;
    padding: 0 29px 0 30px;
    line-height: 64px;
    background: #fff;
    border-top-left-radius: 4px;
}
.composer {
    flex: none;
    width: 1092px;
    height: 193px;
    margin: 0 0 28px 28px;
    border: 1px solid #d8dce6;
    border-radius: 11px;
    padding: 15px 19px 20px;
    display: flex;
    flex-direction: column;
    justify-content: space-between;
}
.placeholder {
    line-height: 36px;
    letter-spacing: 0.1px;
    color: #abb6cc;
}
.composer-tools {
    display: flex;
    gap: 20.6px;
    padding-left: 2px;
    color: #abb6cc;
}

/* AI assistant */
.assistant {
    width: 775px;
    padding: 29px 0 28px;
    display: flex;
    flex-direction: column;
}
.tabs {
    display: flex;
    height: 72px;
    flex: none;
    margin-bottom: 18px;
    border-radius: 11px;
    overflow: hidden;
    background: #fff;
    font-weight: 600;
}
.tab {
    flex: 1;
    display: flex;
    align-items: center;
    justify-content: center;
    gap: 18px;
    padding-bottom: 2px;
    color: #848ba2;
}
.tab.on {
    background: #3b87f7;
    color: #fff;
}
.card {
    flex: 1;
    background: #fff;
    border-radius: 11px;
    padding: 37px 36px 36px;
    display: flex;
    flex-direction: column;
}
.card-title {
    height: 44px;
    display: flex;
    align-items: center;
    color: #23262f;
}
.card-title b {
    padding-bottom: 2px;
    font-weight: 600;
}
.badge {
    margin-left: 8px;
    height: 36px;
    line-height: 35px;
    padding: 0 14px;
    border-radius: 18px;
    background: #8bb55f;
    color: #fff;
    font-size: 21.6px;
    font-weight: 600;
}
.fold {
    margin: 0 5px 0 auto;
    color: #abb6cc;
}
.card-desc {
    line-height: 36px;
    font-size: 23.4px;
    color: #848ba2;
}
.field-label {
    margin-top: 18px;
    line-height: 40px;
}
.radio-row {
    height: 40px;
    margin-top: 11px;
    display: flex;
    align-items: center;
    gap: 10px;
}
.radio-row.second {
    margin-top: 21px;
}
.radio-row span:nth-child(2) {
    padding-bottom: 3px;
}
.radio {
    width: 28px;
    height: 28px;
    margin: 6px 5px 0 0;
    border: 2px solid #d6dae5;
    border-radius: 50%;
}
.radio.checked {
    border-color: #3b87f7;
    background: radial-gradient(circle, #3b87f7 7.5px, #fff 8.5px);
}
.confirm {
    height: 65px;
    flex: none;
    margin-top: 15px;
    padding: 0 0 4px 4px;
    border: 1px dashed #dbe8f8;
    border-radius: 7px;
    background: #f5f8fd;
    display: flex;
    align-items: center;
    justify-content: center;
    gap: 14px;
    color: #3b87f7;
    font-weight: 600;
}
.card-line {
    height: 1px;
    margin: 36px 0 43px;
    background: #e7e9f0;
}
.ask-title {
    padding-left: 7px;
    line-height: 36px;
    letter-spacing: 0.2px;
    color: #23262f;
    font-weight: 600;
}
.ask-row {
    display: flex;
    gap: 14px;
    margin: 28px 0 0 7px;
}
.robot-avatar {
    width: 61px;
    height: 61px;
    border-radius: 50%;
    background: #eff0f5;
    color: #b5bccb;
    display: flex;
    align-items: center;
    justify-content: center;
}
.ask-bubble {
    width: 511px;
    height: 144px;
    padding: 18px 29px;
    border-radius: 4px 32px 32px 32px;
    background: #f7f8fc;
    line-height: 36px;
    white-space: nowrap;
}
.ask-input {
    height: 144px;
    margin: auto 7px 0;
    padding: 19px 21px;
    border: 1px solid #e7e9ef;
    border-radius: 8px;
    display: flex;
    justify-content: space-between;
    line-height: 36px;
    letter-spacing: 0.15px;
    white-space: nowrap;
    color: #abb6cc;
}
.send {
    align-self: flex-end;
    margin: 0 2px 7px 0;
}

/* Floating support button */
.launcher {
    position: absolute;
    left: 2747px;
    top: 1353px;
    width: 86px;
    height: 86px;
    border-radius: 50%;
    background: #5292f5;
    box-shadow: 0 4px 130px rgba(0, 0, 0, 0.12);
    display: flex;
    align-items: center;
    justify-content: center;
}
.unread {
    position: absolute;
    left: 2817px;
    top: 1362px;
    width: 16px;
    height: 14px;
    border-radius: 50%;
    background: #ea5455;
}
.highlight {
    position: absolute;
    left: 2105px;
    top: 1327px;
    width: 716px;
    height: 177px;
    border: 4px solid #ee4023;
    filter: drop-shadow(0 7px 3px rgba(0, 0, 0, 0.22));
}
```
